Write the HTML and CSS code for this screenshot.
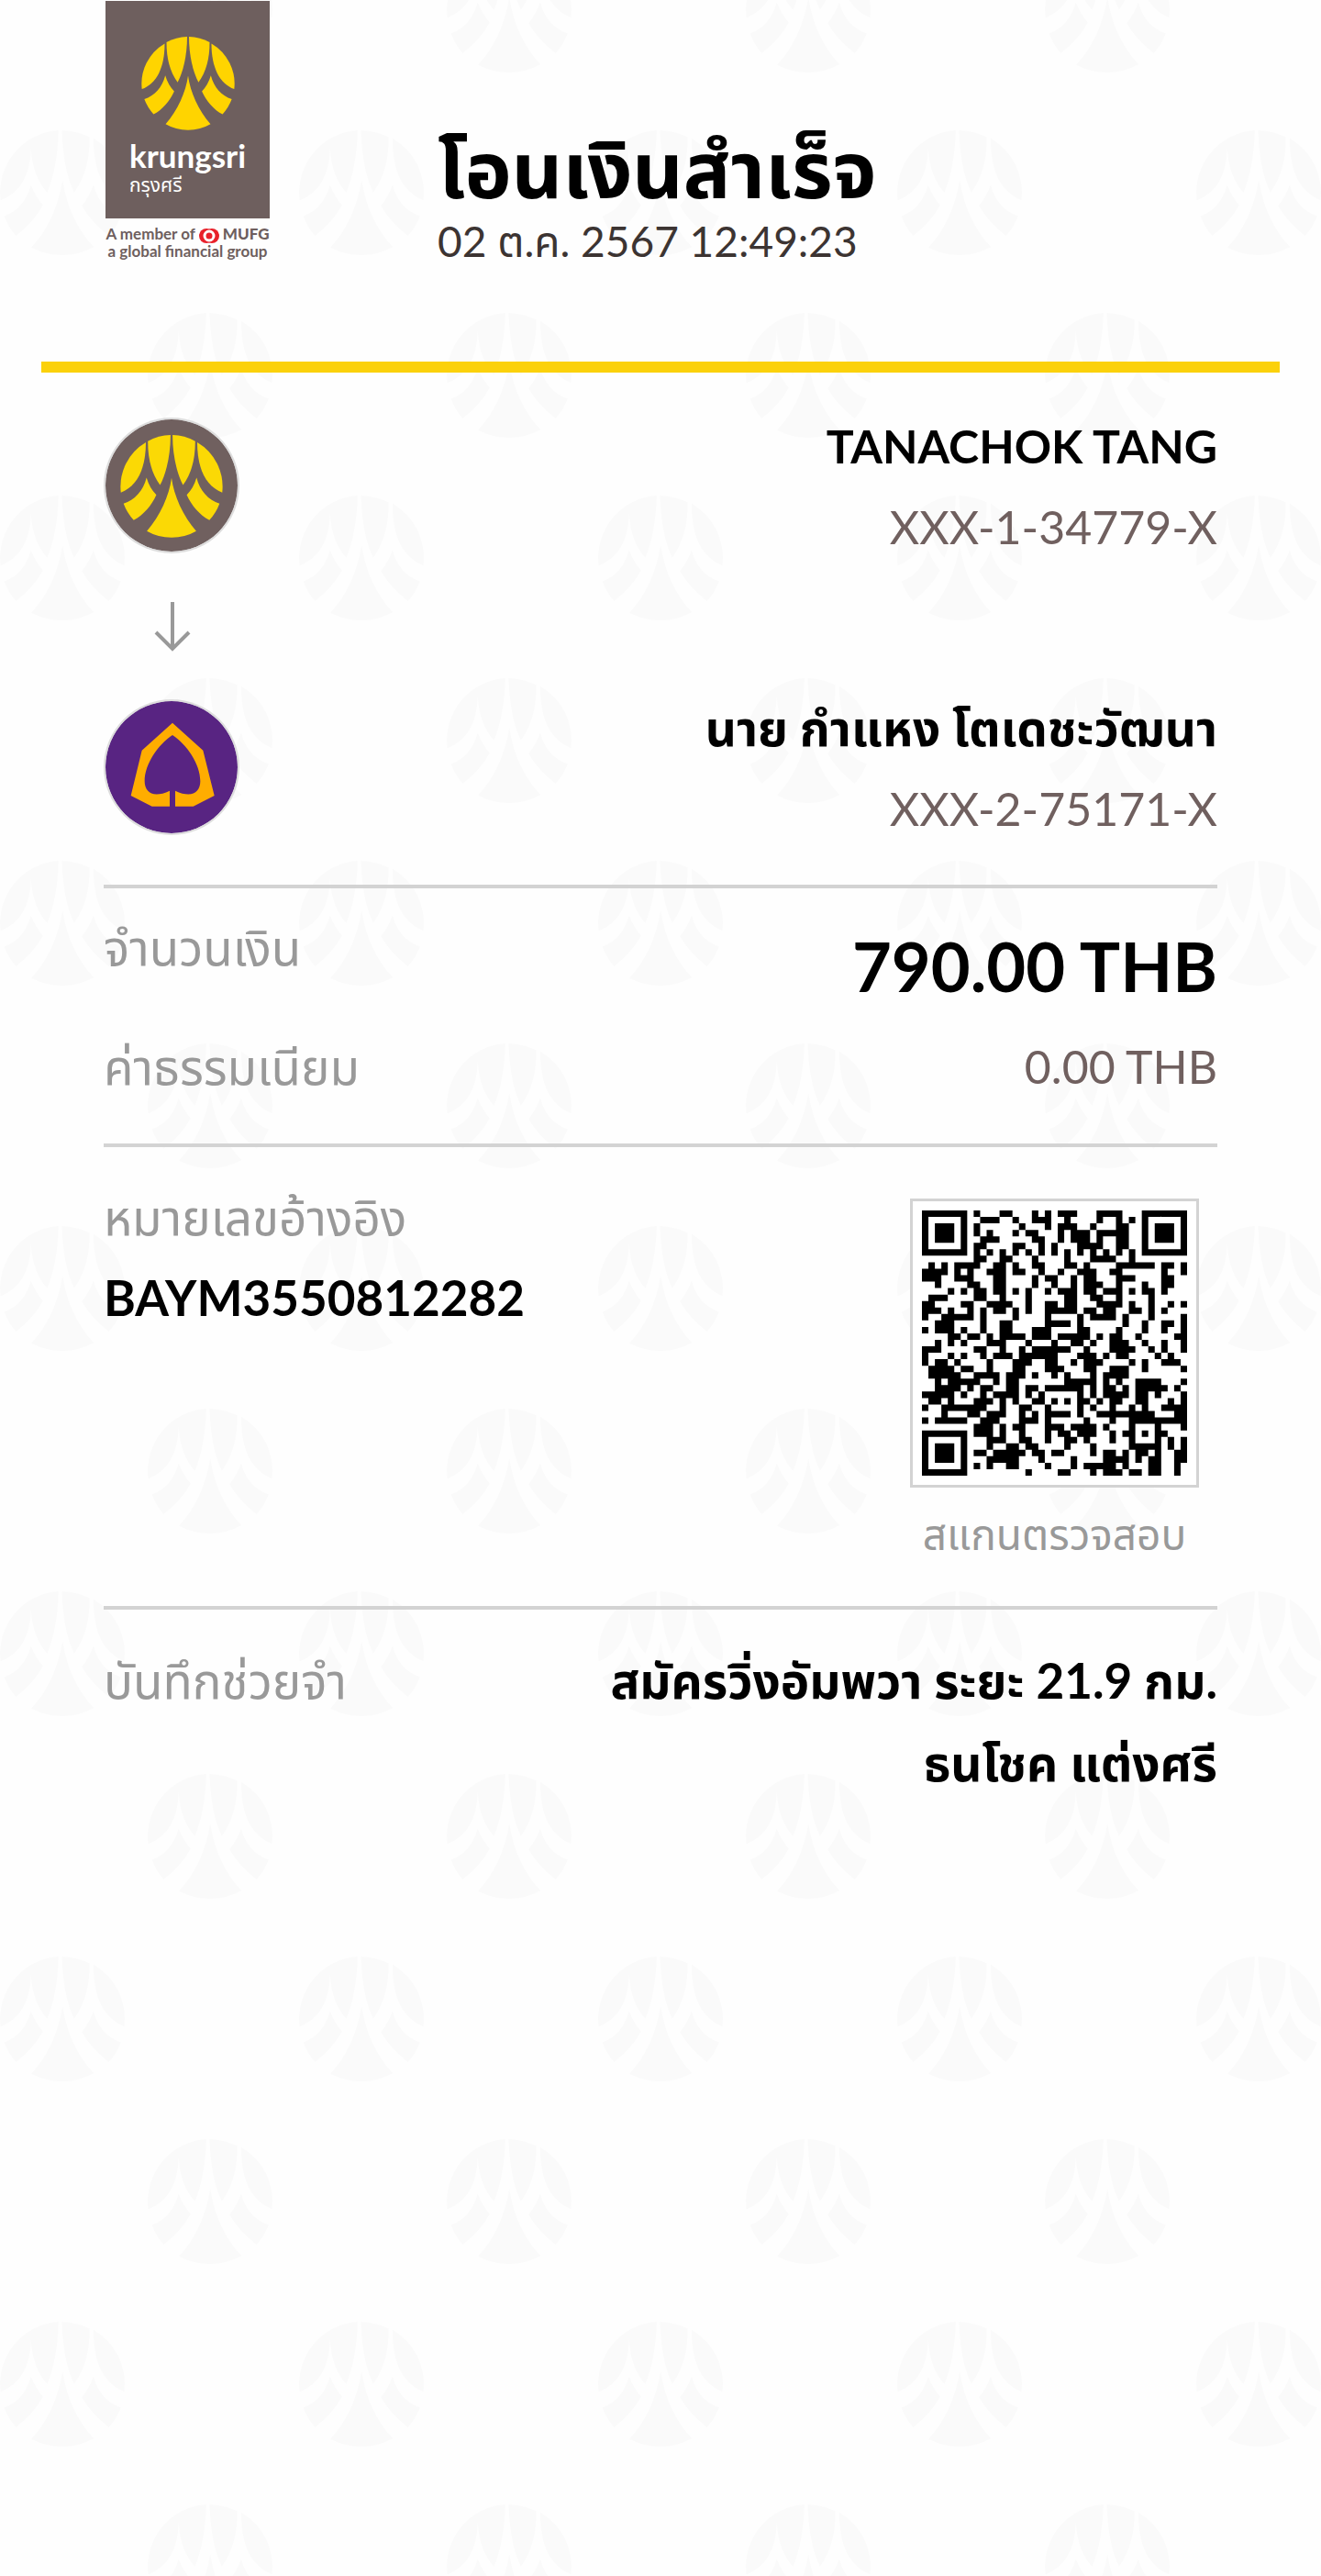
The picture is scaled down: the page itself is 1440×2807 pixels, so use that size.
FILE: index.html
```html
<!DOCTYPE html>
<html lang="th">
<head>
    <meta charset="UTF-8">
    <meta name="viewport" content="width=device-width, initial-scale=1">
    <title>โอนเงินสำเร็จ</title>
    <link rel="stylesheet" href="styles.css">
</head>
<body>

<!-- shared shapes -->
<svg class="defs" width="0" height="0" aria-hidden="true">
    <defs>
        <g id="half">
            <path d="M76 22A152 152 0 0 0 2 170C50 152 76 100 76 22Z"/>
            <path d="M82 18A152 152 0 0 1 149 0C149 60 136 115 118 148C92 112 82 70 82 18Z"/>
            <path d="M78 126C68 165 43 192 10 203Q20 230 40 252C70 235 92 210 107 177Q87 157 78 126Z"/>
            <path d="M152 127C145 180 118 240 79 284Q112 303 152 303Z"/>
        </g>
        <symbol id="emblem" viewBox="0 0 304 304">
            <use href="#half"/>
            <use href="#half" transform="translate(304 0) scale(-1 1)"/>
        </symbol>
        <symbol id="mark" viewBox="0 0 407 407">
            <path d="M2 228A203 203 0 0 1 191 0Q188 120 154 203Q106 150 101 58Q98 190 2 228Z"/>
            <path d="M202 0Q250 2 292 22Q294 130 242 203Q206 130 202 0Z"/>
            <path d="M305 26A203 203 0 0 1 405 228C340 200 305 140 305 26Z"/>
            <path d="M14 280Q80 255 101 178Q115 215 140 244Q110 300 52 344Q26 315 14 280Z"/>
            <path d="M394 280Q325 255 305 178Q292 215 267 246Q298 300 355 344Q382 315 394 280Z"/>
            <path d="M204 162C190 250 155 325 102 382Q150 407 204 407Q258 407 306 380C253 325 218 250 204 162Z"/>
        </symbol>
        <pattern id="tile" y="142" width="326" height="398" patternUnits="userSpaceOnUse">
            <g fill="#fafafa">
                <use href="#mark" width="136" height="136"/>
                <use href="#mark" x="161" y="199" width="136" height="136"/>
            </g>
        </pattern>
    </defs>
</svg>
<svg class="watermark" aria-hidden="true"><rect width="100%" height="100%" fill="url(#tile)"/></svg>

<div class="slip">
    <header class="header">
        <div class="logo">
            <div class="logo-card">
                <svg class="logo-emblem" aria-hidden="true"><use href="#emblem"/></svg>
                <div class="logo-name">krungsri</div>
                <div class="logo-thai">กรุงศรี</div>
            </div>
            <div class="logo-member">
                <div>A member of
                    <svg class="mufg" viewBox="0 0 22 16" aria-hidden="true">
                        <circle cx="8" cy="8" r="8"/>
                        <circle cx="14" cy="8" r="8"/>
                        <circle class="ring" cx="11" cy="8" r="5"/>
                    </svg>
                    <b>MUFG</b></div>
                <div>a global financial group</div>
            </div>
        </div>
        <div class="heading">
            <h1>โอนเงินสำเร็จ</h1>
            <p>02 ต.ค. 2567 12:49:23</p>
        </div>
    </header>

    <main class="content">
        <section class="transfer">
            <div class="party">
                <svg class="bank bank-bay" viewBox="0 0 144 144" role="img" aria-label="Krungsri">
                    <circle cx="72" cy="72" r="72"/>
                    <use href="#emblem" x="16" y="17" width="112" height="112"/>
                </svg>
                <div class="party-text">
                    <div class="name name-en">TANACHOK TANG</div>
                    <div class="account">XXX-1-34779-X</div>
                </div>
            </div>
            <svg class="arrow" viewBox="0 0 40 56" aria-hidden="true">
                <path d="M20 0V51M2 33L20 51L38 33"/>
            </svg>
            <div class="party">
                <svg class="bank bank-bbl" viewBox="0 0 432 432" role="img" aria-label="Bangkok Bank">
                    <circle cx="216" cy="216" r="216"/>
                    <path d="M219 71L319 161L356 309L287 344H228V293C280 318 310 300 310 262C310 205 265 141 219 111C173 141 128 205 128 262C128 300 158 318 210 293V344H152L83 309L119 161Z"/>
                </svg>
                <div class="party-text">
                    <div class="name">นาย กำแหง โตเดชะวัฒนา</div>
                    <div class="account">XXX-2-75171-X</div>
                </div>
            </div>
        </section>

        <section class="amounts">
            <div class="row row-total">
                <span class="label">จำนวนเงิน</span>
                <span class="total">790.00 THB</span>
            </div>
            <div class="row">
                <span class="label">ค่าธรรมเนียม</span>
                <span class="account">0.00 THB</span>
            </div>
        </section>

        <section class="reference">
            <div>
                <div class="label">หมายเลขอ้างอิง</div>
                <div class="name">BAYM3550812282</div>
            </div>
            <div class="scan">
                <svg class="qr" viewBox="0 0 41 41" role="img" aria-label="QR"><path id="qr"/></svg>
                <div class="scan-text">สแกนตรวจสอบ</div>
            </div>
        </section>

        <section class="memo">
            <div class="label">บันทึกช่วยจำ</div>
            <div class="name memo-text">สมัครวิ่งอัมพวา ระยะ 21.9 กม.<br>ธนโชค แต่งศรี</div>
        </section>
    </main>
</div>

<script src="qr.js"></script>
</body>
</html>
```
FILE: styles.css
```css
* {
    box-sizing: border-box;
}
body {
    position: relative;
    min-height: 100vh;
    margin: 0;
    background: #fefefe;
    color: #000;
    font-family: Lato, "Noto Sans Thai", "Noto Sans", sans-serif;
    font-size: 53px;
    line-height: 88px;
}
.defs {
    position: absolute;
}
/* pattern behind the whole slip */
.watermark {
    position: absolute;
    top: 0;
    left: 0;
    width: 100%;
    height: 100%;
}
.slip {
    position: relative;
    padding: 0 45px;
}

/* header */
.header {
    display: flex;
    gap: 183px;
    height: 406px;
    padding: 1px 70px 0;
    border-bottom: 12px solid #fbd10b;
}
.logo {
    width: 179px;
}
.logo-card {
    height: 237px;
    padding: 39px 0 0 26px;
    background: #6e5f5e;
    color: #fff;
}
.logo-emblem {
    display: block;
    width: 102px;
    height: 102px;
    margin-left: 13px;
    fill: #ffd400;
}
.logo-name {
    margin-top: 8px;
    font-size: 35px;
    font-weight: 700;
    line-height: 38px;
}
.logo-thai {
    font-size: 21px;
    line-height: 26px;
}
.logo-member {
    display: flex;
    flex-direction: column;
    align-items: center;
    padding-top: 8px;
    color: #6e5f5e;
    font-size: 17px;
    font-weight: 700;
    line-height: 18px;
    white-space: nowrap;
}
.mufg {
    width: 22px;
    height: 16px;
    fill: #e8202a;
    vertical-align: middle;
}
.mufg .ring {
    fill: #e8202a;
    stroke: #fff;
    stroke-width: 3px;
}
.heading {
    padding-top: 122px;
}
h1 {
    margin: 0;
    font-size: 86px;
    line-height: 120px;
    white-space: nowrap;
}
.heading p {
    margin: 0;
    color: #3c3432;
    font-size: 46px;
    line-height: 40px;
    white-space: nowrap;
}

/* sections */
.content {
    padding: 0 68px;
}
section + section {
    border-top: 4px solid #d3d3d3;
}
.name {
    font-weight: 700;
}
.account {
    color: #70605f;
}
.name-en,
.account {
    font-size: 50px;
}
.label {
    color: #999;
}
.transfer {
    padding: 36px 0 39px;
}
.party {
    display: flex;
    justify-content: space-between;
}
.party-text {
    text-align: right;
}
.bank {
    width: 148px;
    height: 148px;
    margin-top: 13px;
    padding: 2px;
    border-radius: 50%;
    background: #ddd;
}
.bank-bay circle {
    fill: #70605f;
}
.bank-bay use {
    fill: #fbd905;
}
.bank-bbl circle {
    fill: #582482;
}
.bank-bbl path {
    fill: #ffad00;
}
.arrow {
    display: block;
    width: 40px;
    height: 56px;
    margin: 38px 0 37px 55px;
    fill: none;
    stroke: #999;
    stroke-width: 4px;
}
.amounts {
    padding: 20px 0 40px;
}
.row {
    display: flex;
    justify-content: space-between;
}
.row-total {
    height: 130px;
}
.total {
    align-self: center;
    font-size: 74px;
    font-weight: 700;
}
.reference {
    display: flex;
    justify-content: space-between;
    padding: 32px 20px 34px 0;
}
.scan {
    padding-top: 24px;
    text-align: center;
}
.qr {
    display: block;
    width: 315px;
    height: 315px;
    padding: 10px;
    border: 3px solid #d3d3d3;
    background: #fff;
}
.scan-text {
    padding-top: 7px;
    color: #999;
    font-size: 46px;
}
.memo {
    display: flex;
    justify-content: space-between;
    padding: 32px 0;
    line-height: 90px;
}
.memo-text {
    text-align: right;
}
```
FILE: qr.js
```js
// one string per line of the code, '#' is a dark module
var rows = [
    '#######.#...##...#.#.' + '###...####...#######',
    '#.....#..###..#..###.' + '.#....#..#.#.#.....#',
    '#.###.#.#......#...#.' + '###..#...##..#.###.#',
    '#.###.#.#.#...#.##...' + '#.###.#####..#.###.#',
    '#.###.#..###.....##..' + '#.###.#..##..#.###.#',
    '#.....#.##....##..#.#' + '...####..##..#.....#',
    '#######.#.#.#.#.#.#.#' + '.#.#.#.#.#.#.#######',
    '........##..##...#...' + '.#...####..#........',
    '.#.#.####..##.#..##..' + '.##.#....######.##.#',
    '####.#.#..###.##..#..' + '#..###..##......#..#',
    '###..###...##....#.##' + '..#.##...###....##..',
    '..#....##..##....#..#' + '..#.###..#...#..##..',
    '....#.#.##.##.#.#..#.' + '###.##.###.#.##.#...',
    '.###....##..#...#....' + '.##..##..#....#.....',
    '##....##..####..#..##' + '.##...####.#..#..#.#',
    '###.#..#.#.##.#.#..##' + '###.##.##..##.#.#...',
    '#..#####.#....#....#.' + '...#.####.#...#....#',
    '..###....#..##.....##' + '##.#......#..#..##.#',
    '#.###.#..#..##...###.' + '...##....#...#..#..#',
    '....##.##.#.####.###.' + '#####.#.##..#.....##',
    '..#.#.#...###...#...#' + '..##.#..###..#..#..#',
    '###.....##..#..#.####' + '##..#...####..#.#..#',
    '#...#.#..#.###.######' + '...###.#.##....#.#..',
    '#.##.#....#...###..##' + '..#.###....#.#..###.',
    '.####.##..#...##...##' + '#...##..###..#.....#',
    '.#####..####.###.#..#' + '.#...#.####.........',
    '..#.#####..#.##......' + '.#####.#.#..####...#',
    '..####.#.##..##.##.##' + '####.#.##.#.#####.#.',
    '#####.#..#.####.#.#..' + '...#.#.####.##.#...#',
    '.##.#...###.#.#..##.#' + '.#.##.#.##..##...#.#',
    '#..#######..#..##..#.' + '...#.#..#..#.#..####',
    '...#...##.###..#.#.##' + '##.#..#########...##',
    '#.#####..###...###.#.' + '....#...#..#########',
    '........###.#.##...##' + '#.####.#...#...#...#',
    '#######.###.#..#...#.' + '##.###..#.##.#.##...',
    '#.....#...###..##..#.' + '.##.#...#..#...#.#.#',
    '#.###.#...#..##.##...' + '.#...#.....#####.#.#',
    '#.###.#.##.#####.##.#' + '#....#.##.#.##.#..##',
    '#.###.#...#####...#..' + '..#....####.#.##..##',
    '#.....#.#.#..##....#.' + '..#.#####.#...##..#.',
    '#######.........#....' + '##...#.###.##.##..#.'
];
var d = '';
rows.forEach(function (row, y) {
    for (var x = 0; x < row.length; x++) {
        if (row[x] == '#') d += 'M' + x + ' ' + y + 'h1v1h-1z';
    }
});
document.getElementById('qr').setAttribute('d', d);
```
